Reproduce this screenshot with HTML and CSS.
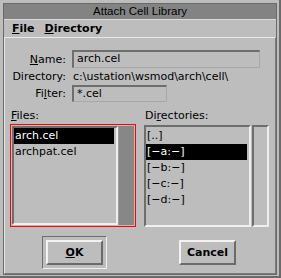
FILE: index.html
```html
<!DOCTYPE html>
<html lang="en">
<head>
    <meta charset="UTF-8">
    <title>Attach Cell Library</title>
    <link rel="stylesheet" href="styles.css">
</head>
<body>
    <div class="ventana">
    <div class="marco">

        <div class="titulo">Attach Cell Library</div>

        <div class="menu">
            <span class="menu-item"><u>F</u>ile</span>
            <span class="menu-item"><u>D</u>irectory</span>
        </div>

        <div class="panel">

            <div class="campos">
                <label class="etiqueta"><u>N</u>ame:</label>
                <div class="caja caja-nombre">arch.cel</div>

                <label class="etiqueta">Directory:</label>
                <div class="ruta">c:\ustation\wsmod\arch\cell\</div>

                <label class="etiqueta">Fi<u>l</u>ter:</label>
                <div class="caja caja-filtro">*.cel</div>
            </div>

            <div class="listas">
                <div class="columna">
                    <div class="titulo-lista"><u>F</u>iles:</div>
                    <div class="foco">
                        <div class="lista lista-ficheros">
                            <div class="fila activa">arch.cel</div>
                            <div class="fila">archpat.cel</div>
                        </div>
                        <div class="barra barra-oscura"></div>
                    </div>
                </div>

                <div class="columna">
                    <div class="titulo-lista">Di<u>r</u>ectories:</div>
                    <div class="sin-foco">
                        <div class="lista lista-dirs">
                            <div class="fila">[..]</div>
                            <div class="fila activa">[−a:−]</div>
                            <div class="fila">[−b:−]</div>
                            <div class="fila">[−c:−]</div>
                            <div class="fila">[−d:−]</div>
                        </div>
                        <div class="barra barra-hundida"></div>
                    </div>
                </div>
            </div>

            <div class="botones">
                <div class="anillo">
                    <button class="boton"><u>O</u>K</button>
                </div>
                <button class="boton boton-cancelar">Cancel</button>
            </div>

        </div>
    </div>
    </div>
</body>
</html>
```

FILE: styles.css
```css
body {
    margin: 0;
    background-color: #bdbdbd;
    font-family: "DejaVu Sans", sans-serif;
    font-size: 11px;
    color: #000;
}

u {
    text-decoration-thickness: 1px;
    text-underline-offset: 1px;
}

.ventana {
    width: 281px;
    height: 278px;
    box-sizing: border-box;
    padding: 3px 2px 1px 3px;
    border-right: 2px solid #6a6a6a;
    border-bottom: 2px solid #6a6a6a;
    background-color: #bdbdbd;
}

.marco {
    height: 100%;
    box-sizing: border-box;
    border: 1px solid #6a6a6a;
    display: flex;
    flex-direction: column;
}

.titulo {
    height: 15px;
    line-height: 15px;
    background-color: #838383;
    text-align: center;
    font-family: "Liberation Sans", sans-serif;
    font-size: 11.5px;
}

.menu {
    height: 17px;
    border-top: 1px solid #dadada;
    display: flex;
    align-items: center;
    gap: 10px;
    padding-left: 8px;
}

.menu-item {
    font-weight: bold;
    font-size: 11px;
}

.panel {
    flex: 1;
    border-top: 1px solid #e8e8e8;
    border-left: 1px solid #e8e8e8;
    border-right: 1px solid #7a7a7a;
    border-bottom: 1px solid #7a7a7a;
}

/* campos de arriba */
.campos {
    display: grid;
    grid-template-columns: 61px auto;
    grid-template-rows: 18px 17px 17px;
    column-gap: 6px;
    padding-top: 12px;
    align-items: center;
}

.etiqueta {
    text-align: right;
}

.caja {
    box-sizing: border-box;
    height: 100%;
    border-top: 2px solid #6e6e6e;
    border-left: 2px solid #6e6e6e;
    border-right: 1px solid #a8a8a8;
    border-bottom: 1px solid #a8a8a8;
    padding-left: 3px;
    line-height: 14px;
}

.caja-nombre {
    width: 188px;
}

.caja-filtro {
    width: 95px;
}

.ruta {
    padding-left: 1px;
}

/* listas */
.listas {
    display: flex;
    gap: 8px;
    padding-left: 5px;
    margin-top: 7px;
}

.titulo-lista {
    height: 14px;
    line-height: 14px;
    padding-left: 1px;
    margin-bottom: 1px;
}

.foco {
    display: flex;
    border: 1px solid #ff0000;
    padding: 1px;
    height: 99px;
}

.sin-foco {
    display: flex;
    gap: 1px;
    padding-top: 1px;
    height: 102px;
}

.lista {
    box-sizing: border-box;
    height: 100%;
    border-top: 2px solid #6e6e6e;
    border-left: 2px solid #6e6e6e;
    border-right: 2px solid #efefef;
    border-bottom: 2px solid #efefef;
    padding: 0 2px 0 0;
}

.lista-ficheros {
    width: 106px;
}

.lista-dirs {
    width: 107px;
    padding-top: 1px;
}

.fila {
    height: 16px;
    line-height: 16px;
    padding-left: 1px;
    white-space: nowrap;
}

.activa {
    background-color: #000;
    color: #fff;
}

.barra {
    box-sizing: border-box;
    height: 100%;
}

.barra-oscura {
    width: 16px;
    background-color: #878787;
    border-left: 1px solid #9c9c9c;
}

.barra-hundida {
    width: 17px;
    border-top: 2px solid #6e6e6e;
    border-left: 2px solid #6e6e6e;
    border-right: 2px solid #efefef;
    border-bottom: 2px solid #efefef;
}

/* botones */
.botones {
    display: flex;
    align-items: center;
    padding-left: 37px;
    margin-top: 9px;
}

.anillo {
    border-top: 1px solid #6e6e6e;
    border-left: 1px solid #6e6e6e;
    border-right: 1px solid #efefef;
    border-bottom: 1px solid #efefef;
    padding: 3px;
}

.boton {
    display: block;
    width: 57px;
    height: 25px;
    box-sizing: border-box;
    background-color: #bdbdbd;
    border-top: 2px solid #f2f2f2;
    border-left: 2px solid #f2f2f2;
    border-right: 2px solid #6a6a6a;
    border-bottom: 2px solid #6a6a6a;
    font-family: "DejaVu Sans", sans-serif;
    font-weight: bold;
    font-size: 11px;
    color: #000;
    padding: 0;
}

.boton-cancelar {
    margin-left: 72px;
}
```
